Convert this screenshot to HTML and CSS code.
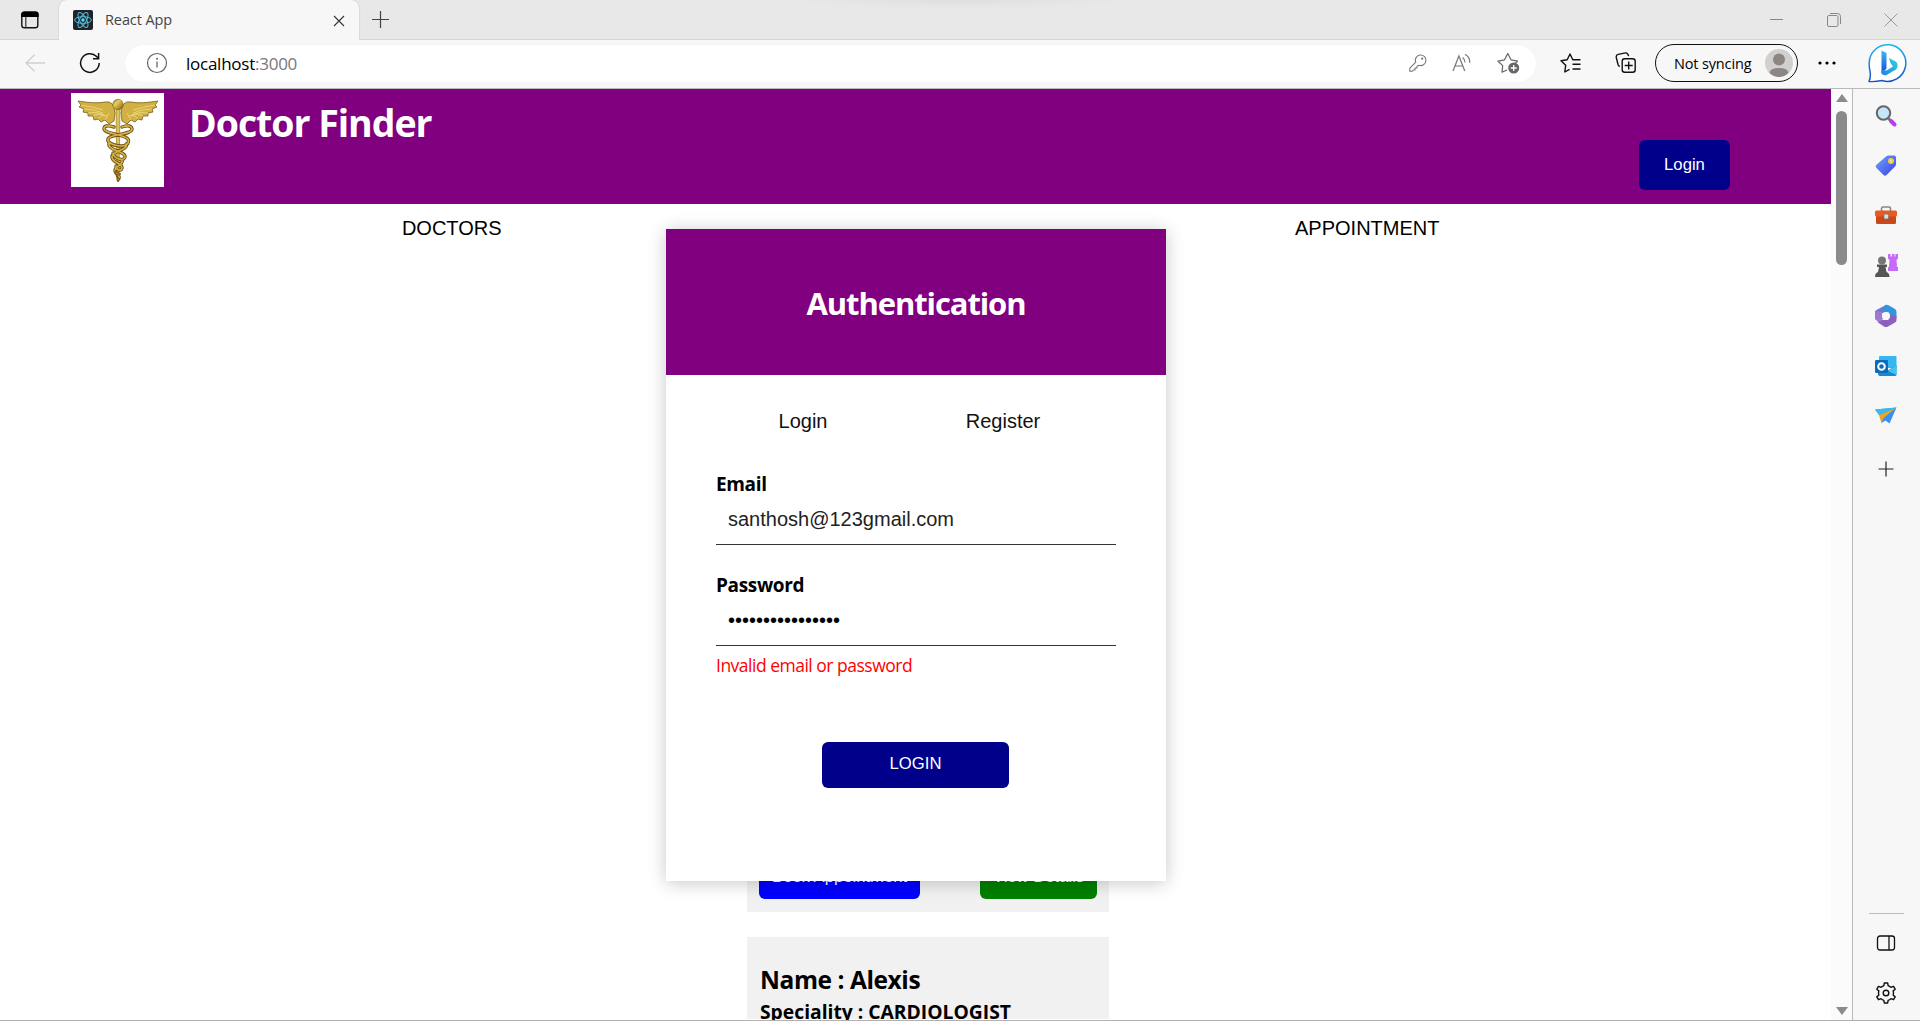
FILE: index.html
```html
<!DOCTYPE html>
<html lang="en">
<head>
<meta charset="utf-8">
<title>React App</title>
<link rel="stylesheet" href="styles.css">
</head>
<body>
<div class="window">
  <div class="tabstrip">
    <div class="workspaces"><svg width="20" height="20" viewBox="0 0 20 20"><rect x="1.8" y="2.2" width="16" height="15.6" rx="2.6" fill="none" stroke="#111" stroke-width="1.4"/><path d="M1.2 7V4.400Q1.200 1.500 4 1.500H16Q18.700 1.500 18.700 4.400V7Z" fill="#000"/><path d="M5.800 7V17.500" stroke="#333" stroke-width="1.200"/></svg></div>
    <div class="tab">
      <svg class="favicon" width="20" height="20" viewBox="0 0 20 20"><rect width="20" height="20" rx="2" fill="#20232a"/><g fill="none" stroke="#53c1de" stroke-width="1"><ellipse cx="10" cy="10" rx="8.400" ry="3.300"/><ellipse cx="10" cy="10" rx="8.400" ry="3.300" transform="rotate(60 10 10)"/><ellipse cx="10" cy="10" rx="8.400" ry="3.300" transform="rotate(120 10 10)"/></g><circle cx="10" cy="10" r="1.700" fill="#61dafb"/></svg>
      <span class="tab-title">React App</span>
      <svg class="tab-close" width="12" height="12" viewBox="0 0 12 12"><path d="M1 1 11 11M11 1 1 11" stroke="#333" stroke-width="1.100"/></svg>
    </div>
    <svg class="new-tab" width="18" height="18" viewBox="0 0 18 18"><path d="M8.500 0V17M0 8.500H17" stroke="#444" stroke-width="1.200"/></svg>
    <div class="controls">
      <svg width="14" height="14" viewBox="0 0 14 14"><path d="M0 6.500H13" stroke="#888"/></svg>
      <svg width="14" height="14" viewBox="0 0 14 14"><g fill="none" stroke="#888"><rect x=".5" y="2.500" width="10.500" height="11" rx="1.500"/><path d="M3 .5H10.500Q13.500 .5 13.500 3.500V11"/></g></svg>
      <svg width="14" height="14" viewBox="0 0 14 14"><path d="M.5 .5 13.500 13.500M13.500 .5 .5 13.500" stroke="#999"/></svg>
    </div>
  </div>
  <div class="toolbar">
    <svg class="back" width="20" height="18" viewBox="0 0 20 18"><path d="M20 9H1M9.500 .7 1 9 9.500 17.300" fill="none" stroke="#cfcfcf" stroke-width="1.300"/></svg>
    <svg class="reload" width="22" height="22" viewBox="0 0 22 22"><path d="M20.200 11A9.300 9.300 0 1 1 17.600 4.600L19.400 6.400M19.600 1V6.700H14" fill="none" stroke="#111" stroke-width="1.500"/></svg>
    <div class="address">
      <svg class="info" width="22" height="22" viewBox="0 0 22 22"><circle cx="11" cy="11" r="9.500" fill="none" stroke="#666" stroke-width="1.200"/><path d="M11 9.500V15.500" stroke="#666" stroke-width="1.300"/><circle cx="11" cy="6.800" r="1" fill="#666"/></svg>
      <span class="url">localhost<span class="port">:3000</span></span>
      <div class="address-icons">
        <svg width="18" height="18" viewBox="0 0 18 18"><path d="M6.700 8.200A5.300 5.300 0 1 1 10 11.300L8 12.200V14H6V16H4.500L3.500 17.200H.8V14.200L6.800 8.200Z" fill="none" stroke="#777" stroke-width="1.100" stroke-linejoin="round"/><circle cx="13.200" cy="4.700" r="1.100" fill="#777"/></svg>
        <svg width="20" height="20" viewBox="0 0 20 20"><path d="M1 18 6.900 3 12.800 18M3 13H10.800M10.600 4.500A6 6 0 0 1 13 9.500M13 1.200A9.500 9.500 0 0 1 17.800 9.700" fill="none" stroke="#777" stroke-width="1.200"/></svg>
        <svg width="23" height="22" viewBox="0 0 23 22"><path d="M10 18 5 20.200 5.700 13.600 1 9.200 7.500 7.800 10.800 1.500 14 7.800 20.500 9.200 18.500 11" fill="none" stroke="#666" stroke-width="1.200" stroke-linejoin="round"/><circle cx="16.700" cy="16" r="5.500" fill="#666"/><path d="M16.700 13V19M13.700 16H19.700" stroke="#fff" stroke-width="1.300"/></svg>
      </div>
    </div>
    <svg class="favorites" width="22" height="20" viewBox="0 0 22 20"><path d="M9.500 16.300 4.800 19 5.700 12.200 1 7.700 7.200 6.700 10 1 12.800 6.700H20.500M12.500 11.300H20.500M12.500 16H20.500" fill="none" stroke="#111" stroke-width="1.400" stroke-linejoin="round"/></svg>
    <svg class="collections" width="22" height="22" viewBox="0 0 22 22"><g fill="none" stroke="#111" stroke-width="1.400"><rect x="7.200" y="6.800" width="13" height="13.400" rx="2.500"/><path d="M13.700 9.500V17.500M9.700 13.500H17.700M4.800 14.500Q3.500 14 3 12.500L1.300 5.500Q.8 3 3.200 2.400L10.500 .9Q12.800 .6 13.600 4.200"/></g></svg>
    <div class="profile"><span>Not syncing</span><svg width="28" height="28" viewBox="0 0 28 28"><circle cx="14" cy="14" r="14" fill="#d2d0ce"/><circle cx="14" cy="10.500" r="6" fill="#8c8683"/><path d="M4.500 24Q5 19 14 19T23.500 24Q19 28 14 28T4.500 24Z" fill="#8c8683"/></svg></div>
    <svg class="more" width="18" height="4" viewBox="0 0 18 4"><circle cx="2" cy="2" r="1.600"/><circle cx="9" cy="2" r="1.600"/><circle cx="16" cy="2" r="1.600"/></svg>
    <svg class="bing" width="40" height="40" viewBox="0 0 40 40"><defs><linearGradient id="bb" x1="0" y1="0" x2="0" y2="1"><stop stop-color="#18b5ee"/><stop offset="1" stop-color="#1b50c8"/></linearGradient><linearGradient id="bl" x1="0" y1="0" x2="0" y2="1"><stop stop-color="#37b9f5"/><stop offset="1" stop-color="#1b48d8"/></linearGradient><linearGradient id="br" x1="1" y1="0" x2="0" y2="1"><stop stop-color="#31d9ce"/><stop offset="1" stop-color="#1d7ff0"/></linearGradient></defs><path d="M2 38.500Q3.800 35 3.200 29Q2 24 2.200 20A18.300 18.300 0 1 1 15 37.500Q8 39 2 38.500Z" fill="#fff" stroke="url(#bb)" stroke-width="1.500" stroke-linejoin="round"/><path d="M14.500 7.500 19.500 10V25.500L14.500 31Z" fill="url(#bl)"/><path d="M22 15 29.500 19Q32 23 29 26.500L19.500 32Q16 33 14.500 30V27L19.500 27.500 26 23.500 23.500 20Z" fill="url(#br)"/></svg>
  </div>
  <div class="main">
    <div class="page">
      <header class="site-header">
        <svg class="logo" width="93" height="94" viewBox="0 0 93 94"><defs><linearGradient id="gold" x1="0" y1="0" x2="1" y2="1"><stop stop-color="#8a6a16"/><stop offset=".35" stop-color="#e6cf63"/><stop offset=".7" stop-color="#b58e25"/><stop offset="1" stop-color="#6d4f10"/></linearGradient></defs><rect width="93" height="94" fill="#fff"/>
          <g id="wing" fill="#d1b044" stroke="#7d5f18" stroke-width=".8"><path d="M7 8Q25 11 34 9T44 20L43 28 38 31 34 27 30 29 27 26 23 27 22 23 17 23 17 20 12 19 13 16 8 14 10 12Z"/><path d="M10 12Q22 14 32 17M13 16Q23 16 32 20M17 20Q25 18 33 22M22 23Q28 19 34 23M27 26Q31 21 36 23M34 27L38 20" fill="none" stroke="#f0dc86"/></g>
          <use href="#wing" transform="translate(94 0) scale(-1 1)"/>
          <path d="M45 15H49L48 88H46Z" fill="#dcc25a" stroke="#8c6c1c" stroke-width=".6"/>
          <g fill="none" stroke-linecap="round"><g stroke="#6e5012" stroke-width="3.400"><path id="coil" d="M43 34Q33 31 33 36C34 42 62 41 57 50C55 56 35 52 37 46C38 41 61 42 61 36Q60 31 51 34M38 50C36 58 55 58 54 64C52 70 42 64 42 60M55 51C58 57 40 58 41 64C41 70 52 70 51 75C50 79 45 77 45 73M51 67C53 72 43 73 44 78C45 82 49 81 48 85"/></g><use href="#coil" stroke="#d5b346" stroke-width="1.600"/></g>
          <path d="M44 78 50 81 45 83 49 86 47 89Z" fill="#a57d20" stroke="#6e5012" stroke-width=".8"/><circle cx="47" cy="11.500" r="5.200" fill="url(#gold)" stroke="#7d5f18" stroke-width=".6"/>
        </svg>
        <h1>Doctor Finder</h1>
        <button class="login-top">Login</button>
      </header>
      <nav class="site-nav"><span>DOCTORS</span><span>APPOINTMENT</span></nav>
      <section class="doctors">
        <article class="card card-first"><button class="book">Book Appointment</button><button class="view">View Details</button></article>
        <article class="card card-next"><h2>Name : Alexis</h2><h3>Speciality : CARDIOLOGIST</h3></article>
      </section>
      <div class="modal">
        <div class="modal-head">Authentication</div>
        <div class="modal-tabs"><span>Login</span><span>Register</span></div>
        <div class="form">
          <label class="label">Email</label>
          <div class="field">santhosh@123gmail.com</div>
          <label class="label second">Password</label>
          <div class="field dots">••••••••••••••••</div>
          <p class="error">Invalid email or password</p>
          <button class="submit">LOGIN</button>
        </div>
      </div>
    </div>
    <div class="scrollbar"><i class="up"></i><i class="thumb"></i><i class="down"></i></div>
    <aside class="sidebar">
      <svg width="24" height="24" viewBox="0 0 24 24"><path d="M14.500 14.500 17 17" stroke="#777" stroke-width="3"/><path d="M17 17 20.500 20.500" stroke="#b73bf5" stroke-width="4" stroke-linecap="round"/><circle cx="9.500" cy="9" r="6.700" fill="#c5e6fa" stroke="#666" stroke-width="2"/></svg>
      <svg width="24" height="24" viewBox="0 0 24 24"><defs><linearGradient id="tg" x1="0" y1="0" x2="1" y2="1"><stop stop-color="#6aa9fa"/><stop offset="1" stop-color="#3d3de8"/></linearGradient></defs><path d="M12 2.500Q13 1.500 14.500 1.500H20Q22 1.500 22 3.500V10Q22 11.500 21 12.500L12.500 21Q11 22.300 9.500 21L2 13.500Q1 12 2.500 10.800Z" fill="url(#tg)"/><circle cx="17" cy="7" r="2.200" fill="#cdd8e8" stroke="#ffc928" stroke-width="1.600"/></svg>
      <svg width="24" height="24" viewBox="0 0 24 24"><path d="M7.500 7V4.500Q7.500 3 9 3H15Q16.500 3 16.500 4.500V7" fill="none" stroke="#888" stroke-width="1.600"/><rect x="2" y="11" width="20" height="9" rx="1.500" fill="#c7481a"/><rect x="1" y="6.500" width="22" height="6" rx="1.500" fill="#e65b1f"/><rect x="10" y="10" width="4.500" height="5" rx="1.500" fill="#ddd" stroke="#777" stroke-width=".7"/></svg>
      <svg width="24" height="24" viewBox="0 0 24 24"><path d="M14 0H16.500V2.500H18V0H20.500V2.500H21.500V0H24V4.500L22.500 6 23 13H24V17H14V13H15L15.500 6 14 4.500Z" fill="#c46bf7"/><circle cx="8" cy="6.500" r="4" fill="#777"/><path d="M3 10.500H13V13H11.500L12.500 18Q15.500 19 15.500 23H1Q1 19 4 18L5 13H3Z" fill="#555"/></svg>
      <svg width="24" height="24" viewBox="0 0 24 24"><path d="M9 2.500 12 1 17 3V8L8 9 7 18 2 16Q1 15 1 13V8Q1 6.500 2.500 6Z" fill="#7c70cf"/><path d="M11 1Q13 .5 15 1.500L21 5Q22.500 6 22.500 8V14L16 12 14.500 8 8 7Z" fill="#3296db"/><path d="M22.500 12V16Q22.500 17.500 21 18.500L14 22.500Q12 23.500 10 22.500L4 18.500Q2.500 17 6.500 16L14 16 16 11Z" fill="#8e60bd"/><path d="M8 8 1 7V14Q2 17 6 18L9 15Z" fill="#9a7bd0"/><circle cx="12" cy="12" r="4" fill="#f7f7f7"/></svg>
      <svg width="24" height="24" viewBox="0 0 24 24"><rect x="5" y="2" width="17.500" height="12" rx="1" fill="#35b8f1"/><path d="M4 12 13 17 22.500 11V20.500Q22.500 22 21 22H6Q4 22 4 20Z" fill="#1789d3"/><path d="M14 17 22.500 11V21Z" fill="#43c3f2"/><rect x="1" y="6" width="13" height="13" rx="1.300" fill="#086bbd"/><circle cx="7.500" cy="12.500" r="3.300" fill="none" stroke="#fff" stroke-width="2"/></svg>
      <svg width="24" height="24" viewBox="0 0 24 24"><path d="M1 5.500 22.500 3.500 15.500 19.500 11.500 16.500 7.500 19 6 12Z" fill="#3c8ff0"/><path d="M5 11 22.500 3.500 9.500 14 7.500 19Z" fill="#eda51d"/><path d="M1 5.500 22.500 3.500 5 11Z" fill="#37bdea"/></svg>
      <svg class="side-plus" width="16" height="16" viewBox="0 0 16 16"><path d="M8 .5V15.500M.5 8H15.500" stroke="#222" stroke-width="1.200"/></svg>
      <div class="side-bottom">
        <svg width="20" height="18" viewBox="0 0 20 18"><rect x="1.500" y="2" width="17" height="14" rx="2.500" fill="none" stroke="#111" stroke-width="1.300"/><path d="M13 2V16" stroke="#111" stroke-width="1.300"/></svg>
        <svg width="22" height="22" viewBox="0 0 22 22"><path d="M8.900 3.600 9.300 1H12.700L13.100 3.600A8 8 0 0 1 16 5.300L18.500 4.300 20.200 7.200 18.200 8.900Q18.800 11 18.200 13.100L20.200 14.800 18.500 17.700 16 16.700A8 8 0 0 1 13.100 18.400L12.700 21H9.300L8.900 18.400A8 8 0 0 1 6 16.700L3.500 17.700 1.800 14.800 3.800 13.100Q3.200 11 3.800 8.900L1.800 7.200 3.500 4.300 6 5.300A8 8 0 0 1 8.900 3.600Z" fill="none" stroke="#111" stroke-width="1.400" stroke-linejoin="round"/><circle cx="11" cy="11" r="2.800" fill="none" stroke="#111" stroke-width="1.400"/></svg>
      </div>
    </aside>
  </div>
</div>
</body>
</html>
```
FILE: styles.css
```css
* { box-sizing: border-box; }
body { margin: 0; font-family: "Open Sans", "Noto Sans", sans-serif; color: #000; }
svg { display: block; flex: none; }
button { border: 0; padding: 0 0 2px; color: #fff; font: 16.67px/19px "Liberation Sans", Arial, sans-serif; }
h1, h2, h3, p { margin: 0; }
.window { width: 1920px; height: 1021px; display: flex; flex-direction: column; overflow: hidden; background: #f7f7f7; border-bottom: 1px solid #b4b0b0; }

.tabstrip { height: 40px; flex: none; display: flex; background: radial-gradient(ellipse 170px 9px at 960px 0, #dfdfdf, #e8e8e8); box-shadow: inset 0 -1px #d6d6d6; }
.workspaces { width: 59px; padding: 10px 0 0 20px; }
.tab { width: 300px; height: 40px; background: #f7f7f7; border-radius: 8px 8px 0 0; display: flex; align-items: center; padding: 0 14px; box-shadow: 0 0 2px #bbb; clip-path: inset(0 -3px 0 -3px); }
.tab-title { margin-left: 12px; flex: 1; font-size: 14.5px; letter-spacing: -.1px; color: #444; padding-bottom: 2px; }
.tab-close { margin-top: 1px; }
.new-tab { margin: 11px 0 0 13px; }
.controls { margin-left: auto; display: flex; gap: 43px; padding: 13px 22px 0 0; }

.toolbar { height: 49px; flex: none; display: flex; align-items: center; padding: 0 13px 2px 25px; border-bottom: 1px solid #b9b9b9; }
.reload { margin-left: 34px; }
.address { margin-left: 24px; width: 1411px; height: 37px; border-radius: 19px; background: #fff; display: flex; align-items: center; padding: 0 16px 0 21px; box-shadow: 0 0 2px #eee; }
.url { margin-left: 18px; font-size: 17px; letter-spacing: -.25px; }
.port { color: #777; }
.address-icons { margin-left: auto; display: flex; align-items: center; gap: 25px; }
.favorites { margin-left: 24px; }
.collections { margin-left: 33px; }
.profile { margin-left: 18px; width: 143px; height: 38px; border: 1.5px solid #111; border-radius: 19px; display: flex; align-items: center; justify-content: space-between; padding: 0 4px 0 18px; font-size: 14.5px; letter-spacing: -.15px; white-space: nowrap; }
.more { margin-left: 20px; }
.bing { margin-left: auto; }

.main { flex: 1; min-height: 0; display: flex; }
.page { width: 1831px; position: relative; overflow: hidden; background: #fff; }
.site-header { height: 115px; background: #800080; display: flex; align-items: flex-start; padding: 4px 101px 0 71px; }
.site-header h1 { margin-left: 25px; padding-top: 3px; font-size: 37.5px; line-height: 54px; letter-spacing: -1.05px; color: #fff; }
.login-top { margin: 47px 0 0 auto; width: 91px; height: 50px; border-radius: 6px; background: #00008b; }
.site-nav { display: grid; grid-template-columns: 1fr 1fr; font: 20px/23px "Liberation Sans", Arial, sans-serif; text-align: center; padding-top: 13px; }
.site-nav span { padding-right: 12px; }
.doctors { padding-top: 555px; margin-left: 747px; width: 362px; }
.card { background: #f1f1f1; }
.card-first { height: 117px; display: flex; align-items: flex-end; justify-content: space-between; padding: 0 12px 13px; margin-bottom: 25px; }
.card-first button { height: 44px; border-radius: 6px; }
.book { width: 161px; background: #00f; }
.view { width: 117px; background: #008000; }
.card-next { height: 82px; padding: 25px 13px 0; }
.card h2 { font-size: 24.5px; line-height: 36px; letter-spacing: -.42px; }
.card h3 { font-size: 19.3px; line-height: 28px; white-space: nowrap; }

.modal { position: absolute; left: 666px; top: 140px; width: 500px; height: 652px; background: #fff; box-shadow: 0 2px 17px rgba(0,0,0,.22); }
.modal-head { height: 146px; background: #800080; color: #fff; font-size: 31px; line-height: 149px; letter-spacing: -1.1px; font-weight: 700; text-align: center; }
.modal-tabs { display: grid; grid-template-columns: 200px 200px; justify-content: center; padding: 34px 0 0; margin-right: 26px; font: 20px/24px "Liberation Sans", Arial, sans-serif; color: #111; text-align: center; }
.form { padding: 37px 50px 0; display: flex; flex-direction: column; }
.label { font-size: 19px; line-height: 28px; letter-spacing: -.35px; font-weight: 700; height: 28px; }
.field { height: 47px; border-bottom: 1px solid #333; padding: 9px 12px 0; font: 20px/24px "Liberation Sans", Arial, sans-serif; color: #222; }
.second { margin-top: 26px; }
.dots { color: #000; }
.error { font-size: 17.5px; line-height: 26px; letter-spacing: -.5px; color: red; padding-top: 6px; }
.submit { align-self: center; margin: 64px 1px 0 0; width: 187px; height: 46px; border-radius: 6px; background: #00008b; padding-bottom: 4px; }

.scrollbar { width: 22px; background: #fbfbfb; border-right: 1px solid #b9b9b9; display: flex; flex-direction: column; align-items: center; padding: 5px 0 5px; }
.up { border: 6px solid transparent; border-top: 0; border-bottom: 8px solid #8b8b8b; }
.thumb { width: 11px; height: 154px; border-radius: 6px; background: #8b8b8b; margin-top: 9px; }
.down { border: 6px solid transparent; border-bottom: 0; border-top: 8px solid #8b8b8b; margin-top: auto; }
.sidebar { width: 67px; display: flex; flex-direction: column; align-items: center; gap: 26px; padding: 15px 1px 0 0; }
.side-plus { margin-top: 7px; }
.side-bottom { margin-top: auto; width: 35px; border-top: 1px solid #bbb; display: flex; flex-direction: column; align-items: center; gap: 30px; padding: 20px 0 16px; }
```
